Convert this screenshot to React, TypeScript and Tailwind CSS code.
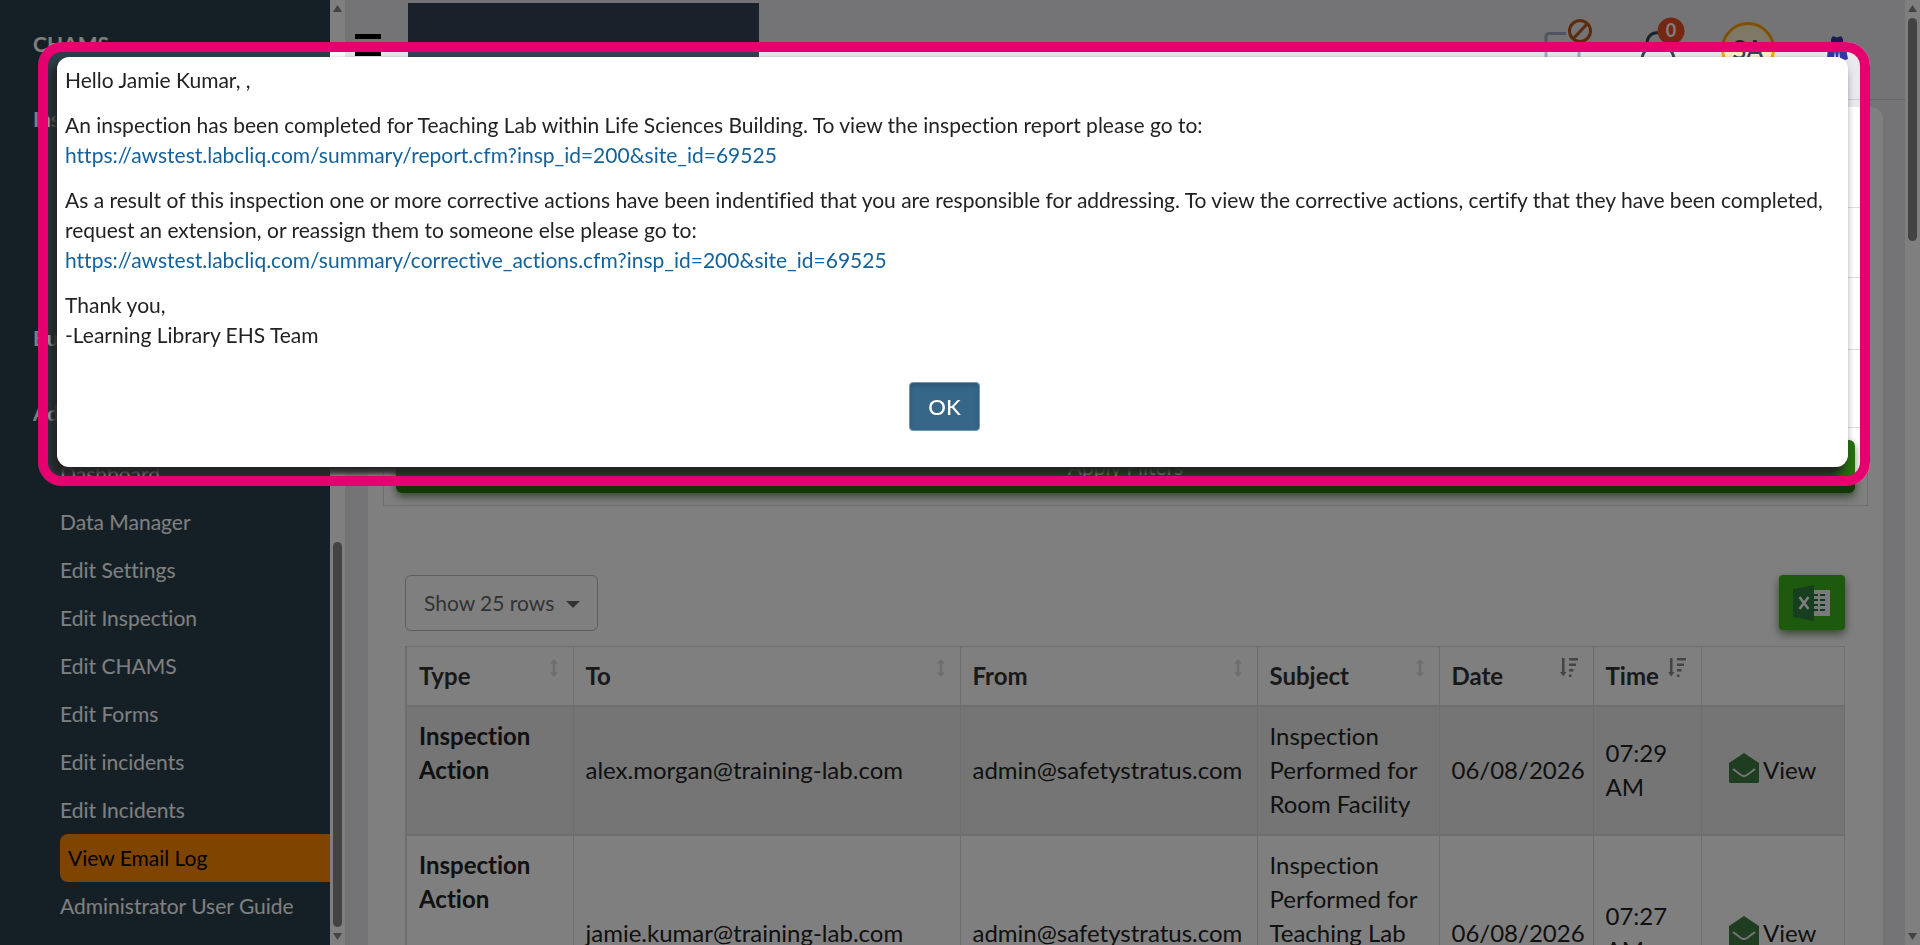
const navItems = [
  "Data Manager",
  "Edit Settings",
  "Edit Inspection",
  "Edit CHAMS",
  "Edit Forms",
  "Edit incidents",
  "Edit Incidents",
];

const emails = [
  {
    type: "Inspection Action",
    to: "alex.morgan@training-lab.com",
    from: "admin@safetystratus.com",
    subject: "Inspection Performed for Room Facility",
    date: "06/08/2026",
    time: "07:29 AM",
  },
  {
    type: "Inspection Action",
    to: "jamie.kumar@training-lab.com",
    from: "admin@safetystratus.com",
    subject: "Inspection Performed for Teaching Lab within Life Sciences",
    date: "06/08/2026",
    time: "07:27 AM",
  },
];

function SortBoth() {
  return (
    <svg width="8" height="18" viewBox="0 0 8 18" fill="#dcdcdc" className="-mt-4 shrink-0">
      <path d="M4 0 8 4.500H5.250v9H8L4 18 0 13.500h2.750v-9H0z" />
    </svg>
  );
}

function SortDesc() {
  return (
    <svg width="18" height="19" viewBox="0 0 18 19" fill="#888888" className="-mt-4 shrink-0">
      <path d="M2 0h2.500v14H6.500L3.250 18.500 0 14h2zM9 0h9v2.500H9zM9 5.500h7V8H9zM9 11h4.500v2.500H9zM9 16.500h2.500V19H9z" />
    </svg>
  );
}

function EnvelopeIcon() {
  return (
    <svg width="30" height="30" viewBox="0 0 30 30" className="-mt-1">
      <path d="M15 0 30 10v18.500a1.500 1.500 0 0 1-1.500 1.500h-27A1.500 1.500 0 0 1 0 28.500V10z" fill="#3c7a43" />
      <path d="m4 16 8 6q3 2 6 0l8-6" fill="none" stroke="#ebebeb" strokeWidth="2" />
    </svg>
  );
}

function ExcelIcon() {
  return (
    <svg width="38" height="36" viewBox="0 0 38 36">
      <path d="M20 5h17v26H20z" fill="#f4f4f4" />
      <path d="M21 9h4v2h-4zM27 9h5v2h-5zM21 14h4v2h-4zM27 14h5v2h-5zM21 19h4v2h-4zM27 19h5v2h-5zM21 24h4v2h-4zM27 24h5v2h-5z" fill="#207245" />
      <path d="M0 4 21 0v36L0 32z" fill="#2f7d3c" />
      <path d="m6.500 12 9 12M15.500 12l-9 12" stroke="#fff" strokeWidth="2.500" />
    </svg>
  );
}

function Scrollbar({ thumb }: { thumb: "top" | "bottom" }) {
  return (
    <div className="flex w-[15px] shrink-0 flex-col items-center justify-between bg-white py-[5px]">
      <svg width="9" height="7" fill="#868686"><path d="M4.500 0 9 7H0z" /></svg>
      {thumb === "bottom" && <div className="grow" />}
      <div className={thumb === "top" ? "mt-[6px] h-[223px] w-[9px] rounded-full bg-[#868686]" : "mb-[6px] h-[385px] w-[9px] rounded-full bg-[#868686]"} />
      {thumb === "top" && <div className="grow" />}
      <svg width="9" height="7" fill="#868686"><path d="M4.500 7 9 0H0z" /></svg>
    </div>
  );
}

function Sidebar() {
  return (
    <nav className="w-[330px] shrink-0 overflow-hidden bg-[#2b414d] text-[21px] leading-[48px] text-white">
      <div className="flex flex-col gap-[27px] pt-5 pl-[33px] font-bold">
        <a href="#chams">CHAMS</a>
        <a href="#inspections" className="mb-36">Inspections</a>
        <a href="#buildings">Buildings</a>
        <a href="#administration">Administration</a>
      </div>
      <ul className="mt-[13px] pl-[60px]">
        <li><a href="#dashboard" className="block">Dashboard</a></li>
        {navItems.map((item) => (
          <li key={item}><a href="#item" className="block">{item}</a></li>
        ))}
        <li><a href="#log" className="block rounded-l-lg bg-[#ff8800] pl-2 text-black">View Email Log</a></li>
        <li><a href="#guide" className="block">Administrator User Guide</a></li>
      </ul>
    </nav>
  );
}

function Header() {
  return (
    <header className="flex h-[100px] shrink-0 items-start border-b border-[#c9ccd1] pr-[57px] pl-[10px]">
      <button aria-label="Toggle menu" className="mt-[34px] flex w-[26px] flex-col gap-3">
        <span className="h-[5px] w-full bg-black" />
        <span className="h-[5px] w-full bg-black" />
      </button>
      <div className="mt-[3px] ml-[27px] h-[80px] w-[351px] bg-[#344256]" />
      <div className="ml-auto flex items-start">
        <svg width="50" height="60" viewBox="0 0 50 60" fill="none">
          <path d="M23 33.500H6a3 3 0 0 0-3 3V60M36 46v14" stroke="#9aabc6" strokeWidth="3" />
          <circle cx="37" cy="31" r="10.500" stroke="#b4561a" strokeWidth="3" />
          <path d="m30 39 14-15" stroke="#b4561a" strokeWidth="3" />
        </svg>
        <svg width="48" height="60" viewBox="0 0 48 60" fill="none" className="ml-11">
          <path d="M22 32.500c-8 0-12 4-12 12M5 60c0-8 6-14.500 16-14.500S37 52 37 60" stroke="#36465c" strokeWidth="3" />
          <circle cx="34" cy="31" r="13.500" fill="#e84e22" />
          <text x="34" y="37" textAnchor="middle" fontSize="18" fontWeight="700" fill="#fff">0</text>
        </svg>
        <div className="mt-[22px] ml-9 flex h-[54px] w-[54px] items-center justify-center rounded-full border-3 border-[#ffa000] bg-[#fff0cc] text-[26px] font-medium text-[#36465c]">SA</div>
        <svg width="22" height="26" viewBox="0 0 22 26" fill="#3535a5" className="mt-9 ml-[51px]">
          <path d="M5 3 7 0l4 1.500L15 0l2 3v3l3 3 1 9 1 5-3 1-5-2-1-7-1 7h-2L9 15l-1 7-7 1 1-14 3-3z" />
        </svg>
      </div>
    </header>
  );
}

function EmailTable() {
  const th = "border border-b-2 border-[#dcdcdc] px-3 text-left font-bold";
  const td = "border border-b-2 border-[#dcdcdc] px-3 pt-3 pb-[13px]";
  return (
    <table className="mt-[15px] w-full table-fixed border-collapse border border-l-2 border-[#dcdcdc] text-[24px] leading-[34px] text-[#222]">
      <colgroup>
        <col className="w-[167px]" />
        <col className="w-[387px]" />
        <col className="w-[297px]" />
        <col className="w-[182px]" />
        <col className="w-[154px]" />
        <col className="w-[108px]" />
        <col />
      </colgroup>
      <thead className="text-[#333]">
        <tr className="h-[59px]">
          {["Type", "To", "From", "Subject"].map((name) => (
            <th key={name} className={th}>
              <div className="flex items-center justify-between pr-[3px]">{name}<SortBoth /></div>
            </th>
          ))}
          {["Date", "Time"].map((name) => (
            <th key={name} className={th}>
              <div className="flex items-center justify-between pr-[3px]">{name}<SortDesc /></div>
            </th>
          ))}
          <th className={th} aria-label="Actions" />
        </tr>
      </thead>
      <tbody>
        {emails.map((email) => (
          <tr key={email.to} className="odd:bg-[#ebebeb]">
            <td className="border border-b-2 border-[#dcdcdc] px-3 pt-3 pb-[13px] align-top font-bold">{email.type}</td>
            <td className={td}>{email.to}</td>
            <td className={td}>{email.from}</td>
            <td className={td}>{email.subject}</td>
            <td className={td}>{email.date}</td>
            <td className={td}>{email.time}</td>
            <td className={td}>
              <a href="#view" className="flex items-center justify-center gap-1"><EnvelopeIcon />View</a>
            </td>
          </tr>
        ))}
      </tbody>
    </table>
  );
}

// The ring's huge shadow dims everything outside of it
function EmailModal() {
  return (
    <div className="fixed top-[42px] right-[50px] left-[38px] overflow-hidden rounded-[24px] border-10 border-[#e6006f] pt-[5px] pr-3 pb-[9px] pl-[9px] shadow-[0_0_0_9999px_rgba(0,0,0,0.5)]">
      <div role="dialog" aria-label="Email" className="flex flex-col gap-[15px] rounded-[12px] bg-white px-2 pt-2 pb-9 text-[21px] leading-[30px] text-[#222] shadow-[-6px_8px_10px_2px_#222]">
        <p>Hello Jamie Kumar, ,</p>
        <p>
          An inspection has been completed for Teaching Lab within Life Sciences Building. To view the inspection report please go to:
          <br />
          <a href="#report" className="text-[#14629c]">https://awstest.labcliq.com/summary/report.cfm?insp_id=200&amp;site_id=69525</a>
        </p>
        <p>
          As a result of this inspection one or more corrective actions have been indentified that you are responsible for addressing. To view the corrective actions, certify that they have been completed, request an extension, or reassign them to someone else please go to:
          <br />
          <a href="#actions" className="text-[#14629c]">https://awstest.labcliq.com/summary/corrective_actions.cfm?insp_id=200&amp;site_id=69525</a>
        </p>
        <p>
          Thank you,
          <br />
          -Learning Library EHS Team
        </p>
        <button className="mt-[17px] mr-4 h-[49px] w-[71px] self-center rounded border border-[#7297b3] bg-[#366688] text-[22px] font-medium text-white shadow-[inset_0_3px_5px_rgba(0,0,0,0.13)]">OK</button>
      </div>
    </div>
  );
}

export default function App() {
  return (
    <div className="flex h-screen overflow-hidden bg-[#e8e9ed] font-[Lato,sans-serif] [font-variant-ligatures:none]">
      <Sidebar />
      <Scrollbar thumb="bottom" />
      <div className="flex min-w-0 grow flex-col overflow-hidden">
        <Header />
        <main className="mt-[7px] mr-[22px] ml-[23px] shrink-0 rounded-t-xl bg-white px-[15px]">
          <section className="border border-t-0 border-[#dcdcdc] pb-3">
            <div className="h-[101px] border-b border-[#dcdcdc]" />
            <div className="h-[70px] border-b border-[#dcdcdc]" />
            <div className="h-[72px] border-b border-[#dcdcdc]" />
            <div className="h-[78px] border-b border-[#dcdcdc]" />
            <div className="px-3 pt-3">
              <button className="h-[53px] w-full rounded-md bg-[#25700f] text-[21px] text-white shadow-[0_4px_8px_rgba(20,70,10,0.6)]">Apply Filters</button>
            </div>
          </section>
          <div className="pt-[69px] pr-[23px] pl-[22px]">
            <div className="flex items-start justify-between">
              <div className="relative flex">
                <select aria-label="Rows per page" className="h-[56px] w-[193px] appearance-none rounded-md border border-[#bbb] bg-white pl-[18px] text-[21px] text-[#666]">
                  <option>Show 25 rows</option>
                </select>
                <svg width="14" height="7" fill="#666" className="pointer-events-none absolute top-[26px] right-[18px]"><path d="M0 0h14L7 7z" /></svg>
              </div>
              <button aria-label="Export to Excel" className="flex h-[55px] w-[66px] items-center justify-center rounded bg-[#3ab41a] shadow-[0_4px_8px_rgba(20,70,10,0.6)]">
                <ExcelIcon />
              </button>
            </div>
            <EmailTable />
          </div>
        </main>
      </div>
      <Scrollbar thumb="top" />
      <EmailModal />
    </div>
  );
}
